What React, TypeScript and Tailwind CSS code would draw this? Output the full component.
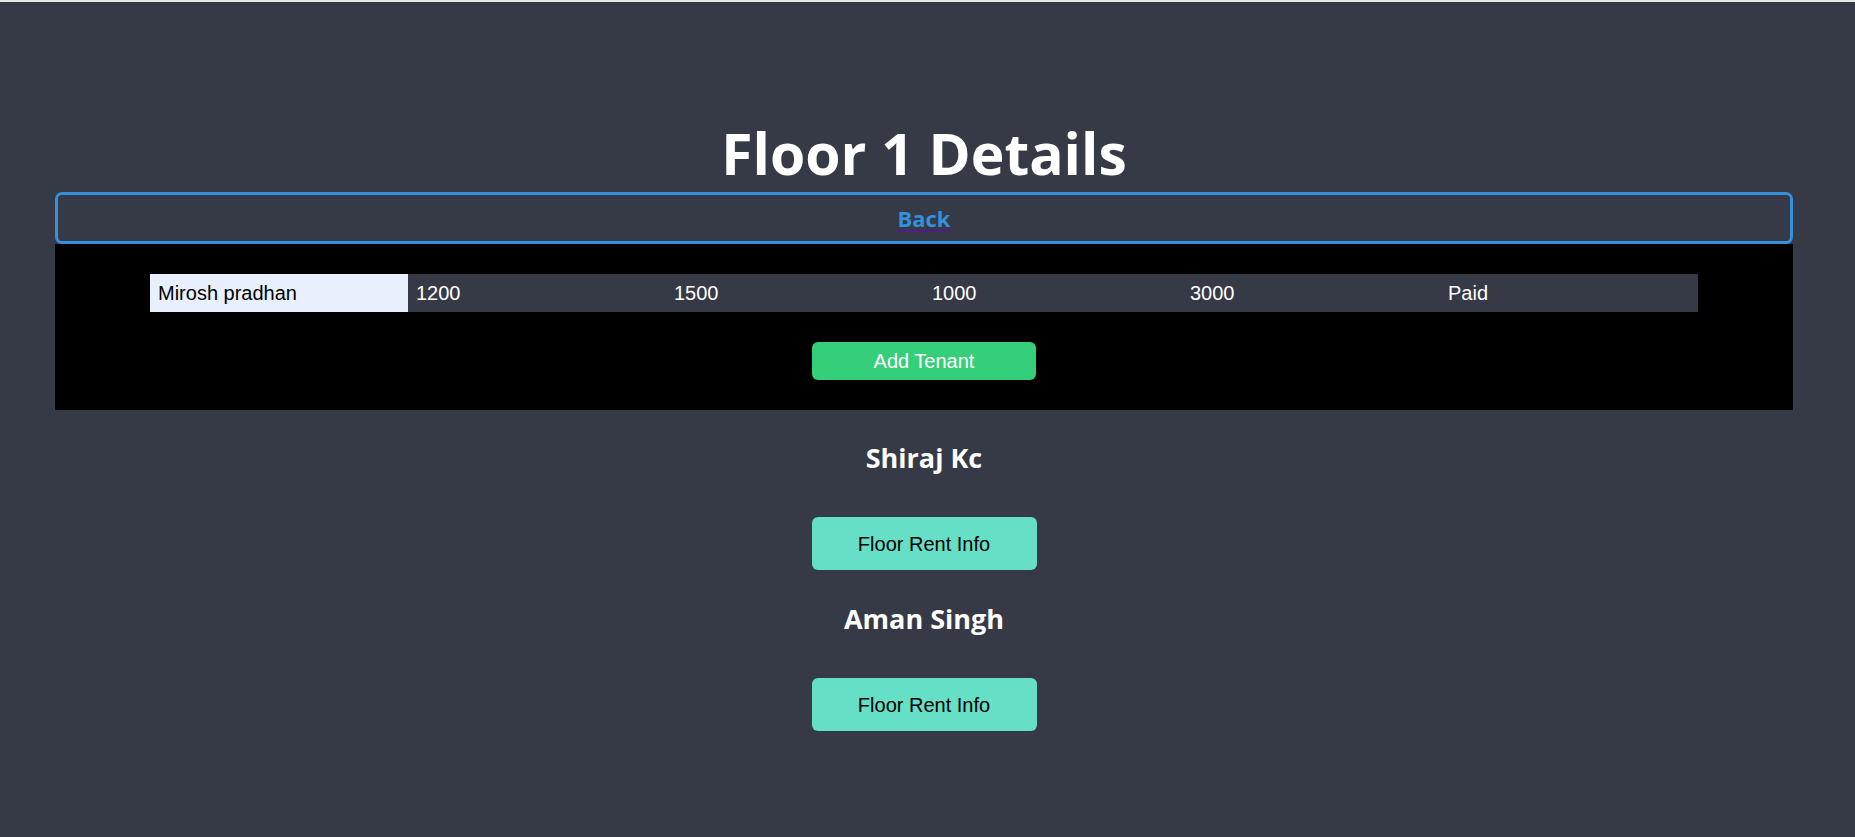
import React from "react";

const cells = ["1200", "1500", "1000", "3000", "Paid"];

function TenantBlock({ name }: { name: string }) {
  return (
    <div className="flex flex-col items-center">
      <h2 className="font-['Open_Sans',sans-serif] font-bold text-[27px] leading-[38px] text-white">
        {name}
      </h2>
      <button className="mt-[40px] w-[225px] h-[53px] rounded-[6px] bg-[#65dfc5] text-black font-['Liberation_Sans',Arial,sans-serif] text-[20px]">
        Floor Rent Info
      </button>
    </div>
  );
}

export default function App() {
  return (
    <div className="min-h-[837px] w-full bg-[#353a46]">
      <div className="h-[2px] w-full bg-[#e6e7e9]" />
      <div className="w-[1848px] px-[55px] pt-[119px] pb-[100px]">
        <h1 className="text-center font-['Open_Sans',sans-serif] font-bold text-[57px] leading-[64px] text-white mb-[7px]">
          Floor 1 Details
        </h1>
        <button className="w-full h-[52px] border-[3px] border-[#3490dc] rounded-[7px] flex items-center justify-center">
          <span className="font-['Open_Sans',sans-serif] font-bold text-[22px] leading-[30px] text-[#3490dc] underline decoration-[#551a8b] decoration-2 underline-offset-[3px]">
            Back
          </span>
        </button>
        <div className="bg-black pt-[30px] pb-[30px] flex flex-col items-center">
          <div className="flex w-[1548px] h-[38px]">
            <div className="w-[258px] h-[38px] bg-[#e8f0fe] text-black px-2 flex items-center font-['Liberation_Sans',Arial,sans-serif] text-[20px]">
              Mirosh pradhan
            </div>
            {cells.map((c) => (
              <div
                key={c}
                className="w-[258px] h-[38px] bg-[#353a46] text-white px-2 flex items-center font-['Liberation_Sans',Arial,sans-serif] text-[20px]"
              >
                {c}
              </div>
            ))}
          </div>
          <button className="mt-[30px] w-[224px] h-[38px] rounded-[6px] bg-[#34cf78] text-white font-['Liberation_Sans',Arial,sans-serif] text-[20px]">
            Add Tenant
          </button>
        </div>
        <div className="flex flex-col items-center mt-[29px] gap-[30px]">
          <TenantBlock name="Shiraj Kc" />
          <TenantBlock name="Aman Singh" />
        </div>
      </div>
    </div>
  );
}
